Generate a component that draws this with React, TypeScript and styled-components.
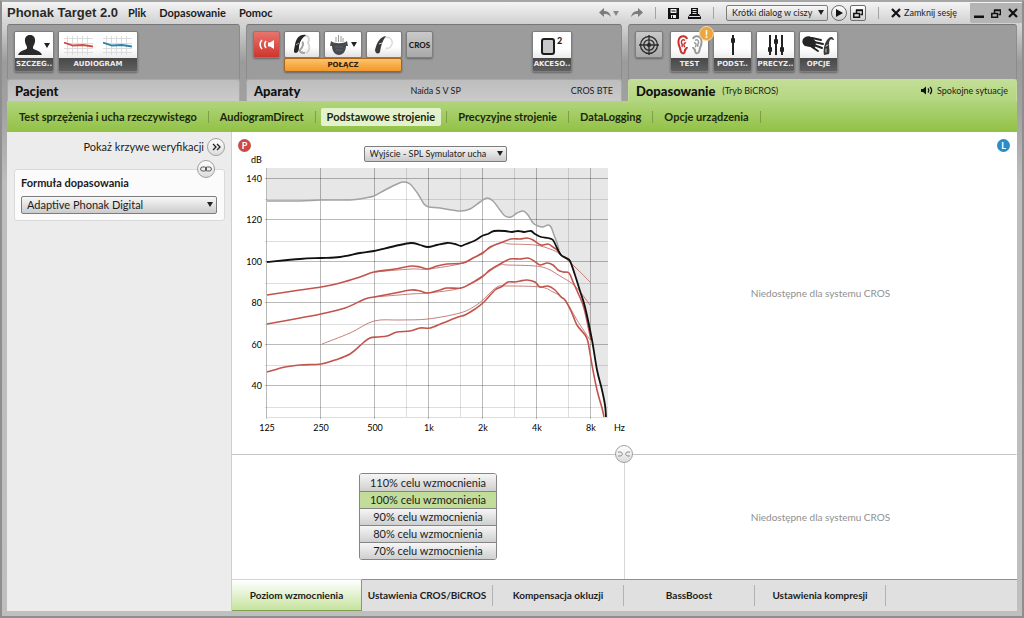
import React from "react";
import styled, { createGlobalStyle, css } from "styled-components";

const GlobalStyle = createGlobalStyle`
  * { box-sizing: border-box; }
  body { margin: 0; font-family: Lato, "Open Sans", sans-serif; font-size: 11px; line-height: 14px; color: #1c1c1c; }
  button, select { font: inherit; color: inherit; margin: 0; padding: 0; border: 0; background: none; }
  h1, h2, p { margin: 0; }
  svg { display: block; }
`;

const geometric = `"Lato", "Inter", sans-serif`;

const Window = styled.div`
  min-height: 100vh;
  display: flex;
  flex-direction: column;
  padding: 0 5px 5px;
  border: 2px solid #8e8e8e;
  border-top-color: #a6a6a6;
  background: linear-gradient(#f0f0f0 0, #d2d2d2 24px, #9b9b9b 60px, #a2a2a2 110px, #bdbdbd 180px, #bfbfbf 100%);
`;

const TitleBar = styled.header`
  display: flex;
  align-items: center;
  justify-content: space-between;
  height: 22px;
  margin: 0 -5px;
  padding-left: 5px;
  background: linear-gradient(#f4f4f4, #d0d0d0);
`;

const Row = styled.div<{ $gap?: number }>`
  display: flex;
  align-items: center;
  gap: ${(p) => p.$gap ?? 0}px;
`;

const AppName = styled.h1`
  font: bold 13px/18px "Liberation Sans", Arial, sans-serif;
  color: #2a2a2a;
`;

const MenuButton = styled.button`
  font-size: 11px;
  font-weight: bold;
`;

const IconButton = styled.button`
  display: grid;
  place-items: center;
`;

const SmallButton = styled(IconButton)<{ $round?: boolean }>`
  width: 16px;
  height: 16px;
  border: 1px solid #6d6d6d;
  border-radius: ${(p) => (p.$round ? "8px" : "2px")};
  background: linear-gradient(#fff, #cfcfcf);
`;

const Separator = styled.span`
  width: 1px;
  height: 12px;
  background: #a3a3a3;
`;

const SelectBox = styled.span<{ $height: number; $width: string; $size: number }>`
  position: relative;
  display: block;
  width: ${(p) => p.$width};
  height: ${(p) => p.$height}px;
  font-size: ${(p) => p.$size}px;

  select {
    appearance: none;
    display: block;
    width: 100%;
    height: 100%;
    border: 1px solid #7d7d7d;
    border-radius: 2px;
    background: linear-gradient(#f8f8f8, #cbcbcb);
    padding-left: 5px;
  }

  svg {
    position: absolute;
    right: 4px;
    top: calc(50% - 3px);
    pointer-events: none;
  }
`;

const CloseSession = styled.button`
  display: flex;
  align-items: center;
  gap: 3px;
  font-size: 9px;
`;

const WindowControls = styled.div`
  display: flex;
  align-items: center;
  justify-content: space-around;
  width: 52px;
  height: 20px;
  align-self: flex-start;
  background: #b4b4b4;
  border-bottom-left-radius: 2px;
`;

const Sections = styled.div`
  display: grid;
  grid-template-columns: 233fr 376fr 389fr;
  column-gap: 6px;
`;

const Toolbar = styled.div`
  display: flex;
  align-items: flex-start;
  gap: 4px;
  height: 55px;
  padding: 6px;
  border: 1px solid #8c8c8c;
  border-top-color: #777;
  border-bottom: 0;
  border-radius: 3px 3px 0 0;
  background: #9c9c9c;
`;

const SectionHead = styled.div<{ $active?: boolean }>`
  display: flex;
  align-items: center;
  height: 22px;
  padding: 0 8px 0 7px;
  font-size: 9px;
  border-radius: 3px 3px 0 0;
  background: ${(p) => (p.$active ? "linear-gradient(#c3de97, #b3d680)" : "linear-gradient(#bdbdbd, #cacaca)")};
  border: 1px solid ${(p) => (p.$active ? "#c3de97" : "#a9a9a9")};
  border-bottom: 0;

  h2 {
    font: 900 13px/18px ${geometric};
    color: #111;
  }
`;

const Spread = styled.span`
  flex: 1;
`;

const tile = css`
  border: 1px solid #7e7e7e;
  border-radius: 2px;
  box-shadow: 0 1px 2px rgba(0, 0, 0, 0.35);
  overflow: hidden;
`;

const Tile = styled.button<{ $width: number }>`
  ${tile}
  display: flex;
  flex-direction: column;
  width: ${(p) => p.$width}px;
  height: 41px;
`;

const Face = styled.span`
  flex: 1;
  width: 100%;
  display: flex;
  align-items: center;
  justify-content: center;
  gap: 10px;
  background: linear-gradient(#fff 60%, #ececec);
`;

const TileLabel = styled.span`
  width: 100%;
  height: 13px;
  font: bold 7px/12px "DejaVu Sans", sans-serif;
  text-align: center;
  white-space: nowrap;
  color: #ececec;
  background: linear-gradient(#484848, #606060);
`;

const FlatTile = styled.button<{ $width: number; $tone?: "red" | "gray" }>`
  ${tile}
  display: flex;
  align-items: center;
  justify-content: center;
  gap: 3px;
  width: ${(p) => p.$width}px;
  height: 27px;
  font-size: 8px;
  font-weight: 900;
  background: ${(p) =>
    p.$tone === "red"
      ? "linear-gradient(#e8746c, #cf352c)"
      : p.$tone === "gray"
        ? "linear-gradient(#c9c9c9, #a9a9a9)"
        : "linear-gradient(#fff 60%, #e2e2e2)"};
`;

const Aids = styled.div`
  display: grid;
`;

const Connect = styled.button`
  ${tile}
  height: 14px;
  border-color: #a8641a;
  background: linear-gradient(#fcc36a, #f2972a);
  font: bold 7px/12px "DejaVu Sans", sans-serif;
  color: #33200a;
`;

const Pushed = styled.span`
  margin-left: auto;
  padding-right: 43px;
`;

const BadgeHost = styled.span`
  position: relative;
  margin-left: 3px;
`;

const Badge = styled.span`
  position: absolute;
  top: -5px;
  right: -5px;
  width: 15px;
  height: 15px;
  border: 1px solid #f6dcae;
  border-radius: 8px;
  background: #eda63e;
  color: #fff;
  font: bold 11px/13px ${geometric};
  text-align: center;
`;

const GreenNav = styled.nav`
  display: flex;
  align-items: center;
  height: 31px;
  padding-left: 6px;
  background: linear-gradient(#b1d57c, #92c145);
`;

const NavItem = styled.button<{ $active?: boolean }>`
  height: 18px;
  padding: 0 6px;
  border-radius: 2px;
  font: bold 11px/16px ${geometric};
  color: #1c280c;
  background: ${(p) => (p.$active ? "#e4f1cd" : "none")};
`;

const NavSeparator = styled(Separator)`
  margin: 0 5px;
  background: #7d9f46;
`;

const Body = styled.div`
  flex: 1;
  display: flex;
`;

const Sidebar = styled.aside`
  width: 225px;
  padding: 6px 6px 6px 7px;
  border-right: 1px solid #cfcfcf;
  background: #ececec;
`;

const RoundButton = styled(IconButton)`
  width: 18px;
  height: 18px;
  border: 1px solid #a0a0a0;
  border-radius: 9px;
  background: linear-gradient(#fff, #dcdcdc);
`;

const VerifyRow = styled.div`
  display: flex;
  justify-content: flex-end;
  align-items: center;
  gap: 3px;
`;

const FormulaCard = styled.section`
  position: relative;
  margin-top: 13px;
  padding: 6px 7px 6px 6px;
  border: 1px solid #dadada;
  border-radius: 3px;
  background: #fbfbfb;

  label { display: block; font-weight: bold; margin-bottom: 6px; }
`;

const LinkButton = styled(RoundButton)`
  position: absolute;
  top: -10px;
  right: 9px;
`;

const Main = styled.main`
  flex: 1;
  display: flex;
  flex-direction: column;
  background: #fff;
`;

const Panes = styled.div`
  flex: 1;
  position: relative;
  display: grid;
  grid-template-columns: 1fr 1fr;
  grid-template-rows: 323fr 124fr;
`;

const Pane = styled.section<{ $line?: boolean }>`
  position: relative;
  display: flex;
  flex-direction: column;
  align-items: center;
  border-right: 1px solid ${(p) => (p.$line ? "#d8d8d8" : "transparent")};
`;

const UpperPane = styled(Pane)`
  border-bottom: 1px solid #c4c4c4;
`;

const CoupleButton = styled(RoundButton)`
  position: absolute;
  left: calc(50% - 10px);
  top: calc(323 / 447 * 100% - 10px);
`;

const SideMark = styled.span<{ $side: "left" | "right" }>`
  position: absolute;
  top: 7px;
  ${(p) => (p.$side === "left" ? "left: 6px; background: #cc4a44;" : "right: 6px; background: #2c8cc8;")}
  width: 13px;
  height: 13px;
  border-radius: 7px;
  color: #fff;
  font: bold 9px/13px ${geometric};
  text-align: center;
`;

const ChartHead = styled.div`
  padding: 14px 0 0 14px;
`;

const Chart = styled.svg`
  align-self: flex-start;
  margin: -12px 0 0 10px;
  overflow: visible;
  font-size: 9px;
`;

const Unavailable = styled.p`
  margin: auto;
  font-size: 10px;
  color: #8f8f8f;
`;

const GainList = styled.div`
  display: grid;
  width: 138px;
  margin-top: 18px;
  border: 1px solid #858585;
  border-radius: 3px;
  overflow: hidden;
`;

const GainButton = styled.button<{ $active?: boolean }>`
  height: 17px;
  line-height: 16px;
  background: ${(p) => (p.$active ? "#c2dd9a" : "linear-gradient(#f6f6f6, #cfcfcf)")};

  & + & { border-top: 1px solid #858585; }
`;

const BottomTabs = styled.nav`
  display: flex;
  height: 32px;
  background: #e0e0e0;
`;

const BottomTab = styled.button<{ $active?: boolean }>`
  display: flex;
  align-items: center;
  justify-content: center;
  width: ${(p) => (p.$active ? "130px" : "131px")};
  font-size: 10px;
  font-weight: bold;
  border-top: 1px solid ${(p) => (p.$active ? "transparent" : "#8f8f8f")};
  ${(p) =>
    p.$active &&
    css`
      background: linear-gradient(#fff, #c6e39e);
      border-right: 1px solid #8f8f8f;
      border-bottom: 1px solid #7fa055;
    `}

  span { flex: 1; line-height: 21px; }
  ${(p) => !p.$active && "span { border-right: 1px solid #b2b2b2; }"}
`;

const TabFiller = styled.span`
  flex: 1;
  border-top: 1px solid #8f8f8f;
`;

type Point = [number, number];

const PLOT = { left: 25, top: 18, width: 341, height: 249 };

const outputLimit: Point[] = [
  [0, 33], [33, 33], [54, 32], [83, 32], [98, 30], [107, 28], [118, 22], [128, 17], [136, 14], [143, 16], [151, 26],
  [157, 36], [162, 39], [173, 40], [193, 43], [203, 41], [213, 34], [220, 30], [226, 33], [233, 42], [238, 48],
  [244, 49], [250, 45], [256, 43], [261, 47], [266, 55], [271, 58], [276, 59], [281, 57], [284, 59], [287, 67],
  [290, 75], [292, 82],
];
const maximum: Point[] = [
  [0, 94], [33, 91], [54, 90], [73, 89], [93, 85], [107, 83], [128, 78], [144, 75], [153, 77], [161, 79], [170, 77],
  [180, 75], [188, 76], [194, 78], [199, 76], [207, 73], [215, 68], [221, 66], [227, 63], [238, 63], [245, 64],
  [251, 63], [257, 64], [264, 63], [268, 66], [274, 69], [281, 70], [286, 72], [290, 80], [294, 87], [299, 90],
  [303, 93], [308, 107], [313, 123], [318, 139], [325, 172], [330, 202], [335, 222], [338, 237], [339, 249],
];
const loud: Point[] = [
  [0, 127], [33, 122], [54, 119], [73, 115], [93, 109], [107, 104], [128, 101], [144, 98], [153, 99], [161, 101],
  [170, 98], [180, 96], [196, 95], [206, 90], [216, 85], [223, 79], [233, 75], [244, 71], [253, 71], [260, 70],
  [266, 72], [274, 77], [281, 76], [286, 79], [290, 82], [294, 87], [299, 90], [303, 93],
];
const medium: Point[] = [
  [0, 156], [33, 150], [54, 146], [78, 140], [98, 131], [107, 129], [123, 126], [144, 122], [153, 123], [161, 125],
  [173, 122], [180, 120], [194, 120], [203, 116], [215, 109], [223, 102], [233, 96], [243, 91], [253, 91],
  [261, 90], [267, 93], [273, 97], [280, 95], [286, 97], [291, 102], [296, 104], [302, 105], [306, 114],
  [311, 125], [317, 140], [324, 172],
];
const soft: Point[] = [
  [0, 204], [18, 199], [33, 197], [54, 196], [68, 192], [83, 186], [96, 175], [103, 170], [111, 169], [120, 168],
  [130, 164], [143, 163], [153, 160], [163, 160], [176, 155], [191, 149], [198, 147], [208, 141], [217, 134],
  [228, 122], [234, 119], [241, 114], [248, 114], [253, 113], [260, 112], [268, 114], [273, 119], [281, 118],
  [288, 122], [294, 129], [298, 132], [304, 143], [310, 157], [318, 167], [321, 174], [325, 197], [330, 222],
  [335, 240], [337, 249],
];
const targets: Point[][] = [
  [[107, 104], [144, 101], [161, 101], [196, 95], [216, 84], [233, 75], [243, 76], [268, 77], [283, 81], [293, 86], [308, 99], [323, 114]],
  [[107, 129], [144, 126], [161, 125], [194, 120], [215, 108], [233, 97], [240, 97], [268, 98], [281, 101], [293, 108], [308, 118], [323, 137]],
  [[55, 176], [83, 165], [107, 153], [133, 152], [161, 151], [193, 145], [208, 138], [218, 130], [230, 119], [240, 118], [273, 119], [286, 124], [298, 132], [310, 152], [323, 172]],
];

const n = (v: number) => v.toFixed(1);

const smooth = (pts: Point[]) =>
  pts.slice(1).reduce((d, p, i) => {
    const a = pts[i - 1] ?? pts[i];
    const b = pts[i];
    const c = pts[i + 2] ?? p;
    return `${d}C${n(b[0] + (p[0] - a[0]) / 6)} ${n(b[1] + (p[1] - a[1]) / 6)} ${n(p[0] - (c[0] - b[0]) / 6)} ${n(p[1] - (c[1] - b[1]) / 6)} ${p[0]} ${p[1]}`;
  }, `M${pts[0][0]} ${pts[0][1]}`);

const frequencies: [number, string][] = [
  [0, "125"], [54, "250"], [108, "500"], [162, "1k"], [216, "2k"], [270, "4k"], [324, "8k"],
];
const levels: [number, string][] = [
  [11, "140"], [52, "120"], [94, "100"], [135, "80"], [177, "60"], [218, "40"],
];
const minorX = [139, 193, 247, 301];
const minorY = [31, 73, 115, 156, 197, 239];

function SplChart() {
  const tail = maximum.slice(29);
  const shade = `${smooth(outputLimit)}L${tail.map((p) => p.join(" ")).join("L")}L${PLOT.width} ${PLOT.height}V0H0Z`;
  return (
    <Chart width="382" height="284" role="img" aria-label="Wyjście SPL">
      <text x="9" y="13">dB</text>
      <g transform={`translate(${PLOT.left} ${PLOT.top})`} fill="none">
        <path d={shade} fill="#e7e7e7" />
        <g stroke="#000" strokeOpacity="0.13" shapeRendering="crispEdges">
          {minorX.map((x) => <path key={x} d={`M${x + 0.5} 0V${PLOT.height}`} />)}
          {minorY.map((y) => <path key={y} d={`M-2 ${y + 0.5}H${PLOT.width}`} />)}
          <path d={`M0 ${PLOT.height + 0.5}H${PLOT.width}`} />
        </g>
        <g stroke="#000" strokeOpacity="0.27" shapeRendering="crispEdges">
          {frequencies.map(([x]) => <path key={x} d={`M${x - 0.5} 0V${PLOT.height + 2}`} />)}
          {levels.map(([y]) => <path key={y} d={`M-2 ${y - 0.5}H${PLOT.width}`} />)}
        </g>
        <path d={smooth(outputLimit)} stroke="#a2a2a2" strokeWidth="1.5" />
        {targets.map((t, i) => <path key={i} d={smooth(t)} stroke="#b9605c" strokeWidth="0.8" />)}
        {[loud, medium, soft].map((c, i) => <path key={i} d={smooth(c)} stroke="#c2544c" strokeWidth="1.6" />)}
        <path d={smooth(maximum)} stroke="#111" strokeWidth="1.8" />
      </g>
      {levels.map(([y, label]) => (
        <text key={label} x="20" y={PLOT.top + y + 3} textAnchor="end">{label}</text>
      ))}
      {frequencies.map(([x, label]) => (
        <text key={label} x={PLOT.left + x} y="281" textAnchor="middle">{label}</text>
      ))}
      <text x="372" y="281">Hz</text>
    </Chart>
  );
}

const Caret = ({ color = "#222" }: { color?: string }) => (
  <svg width="6" height="5" viewBox="0 0 6 5" aria-hidden="true"><path d="M0 0H6L3 5Z" fill={color} /></svg>
);

const Undo = ({ flip = false }: { flip?: boolean }) => (
  <svg width="12" height="10" viewBox="0 0 12 10" aria-hidden="true">
    <path transform={flip ? "translate(12 0) scale(-1 1)" : undefined} d="M5 0V3C9 3 11 5 12 9C10 6.500 8 6 5 6V9L0 4.500Z" fill="#7c7c7c" />
  </svg>
);

const Save = () => (
  <svg width="11" height="11" viewBox="0 0 11 11" aria-hidden="true">
    <path d="M0 0H11V11H0Z" fill="#111" /><path d="M2.500 1H8.500V5H2.500ZM3 7H8V10H3Z" fill="#eee" /><path d="M3.500 3H7.500M4.500 7.500V10" stroke="#111" fill="none" />
  </svg>
);

const Print = () => (
  <svg width="13" height="11" viewBox="0 0 13 11" aria-hidden="true">
    <path d="M3 0H10V6H11L13 9V11H0V9L2 6H3Z" fill="#111" /><path d="M4.500 1.500H8.500M4.500 3.500H8.500M4.500 5.500H8.500M1 8.500H12" stroke="#ddd" fill="none" />
  </svg>
);

const Cross = () => (
  <svg width="10" height="10" viewBox="0 0 10 10" aria-hidden="true"><path d="M1 1L9 9M9 1L1 9" stroke="#111" strokeWidth="2.200" /></svg>
);

const Windows = () => (
  <svg width="10" height="9" viewBox="0 0 10 9" fill="none" stroke="#111" aria-hidden="true">
    <path d="M3.500 4V1.500H9.500V5.500H7.500M3 1H10" strokeWidth="1.500" /><path d="M.8 4.500H6.500V8.200H.8Z" strokeWidth="1.500" />
  </svg>
);

const Person = () => (
  <svg width="24" height="21" viewBox="0 0 24 21" fill="#292929" aria-hidden="true">
    <path d="M12 0C15.500 0 17.500 2.500 17 6.500C16.700 9 15.500 10.500 15 12V13.500C16 15 22 15 24 20H0C2 15 8 15 9 13.500V12C8.500 10.500 7.300 9 7 6.500C6.500 2.500 8.500 0 12 0Z" />
  </svg>
);

const MiniAudiogram = ({ color }: { color: string }) => (
  <svg width="29" height="19" viewBox="0 0 29 19" fill="none" aria-hidden="true">
    <path d="M3.500 0V19M8.500 0V19M13.500 0V19M18.500 0V19M23.500 0V19M0 2.500H29M0 7.500H29M0 12.500H29M0 16.500H29" stroke="#dcdcdc" />
    <path d="M0 6.500L9 9.500L19 9L29 10.500" stroke={color} strokeWidth="1.800" />
  </svg>
);

const Sound = () => (
  <svg width="16" height="11" viewBox="0 0 16 11" fill="none" stroke="#fff" strokeWidth="1.600" aria-hidden="true">
    <path d="M3 1C.5 3.500 .5 7.500 3 10M7 2C5.500 4 5.500 7 7 9" /><path d="M15 1V10L11 7.500H9V3.500H11Z" fill="#fff" stroke="none" />
  </svg>
);

const HearingAid = () => (
  <svg width="18" height="21" viewBox="0 0 18 21" fill="none" aria-hidden="true">
    <path d="M11 2C16 1 17 5 15 9C17 12 17 17 13 19" stroke="#d4d4d4" strokeWidth="2" />
    <path d="M13 1C6 0 3 5 2 11C1 16 0 19 3 19C6 18 6 15 6 12C7 7 9 4 13 1Z" fill="#262626" />
    <path d="M9 8C11 9 10 13 7 16C6 18 9 19 12 19" stroke="#a5a5a5" strokeWidth="2" /><path d="M3 11L6 9" stroke="#aaa" />
  </svg>
);

const EarPiece = () => (
  <svg width="18" height="20" viewBox="0 0 18 20" fill="none" aria-hidden="true">
    <path d="M6 7V2M8.500 7V0M11 7V1M13 7V3" stroke="#9a9a9a" />
    <path d="M1 6C4 9 14 9 17 6L18 11L16 11C16 16 13 20 9 20C5 20 2 16 2 11H0Z" fill="#474a50" /><path d="M5 12H13M6 15H12" stroke="#606368" />
  </svg>
);

const SmallAid = () => (
  <svg width="20" height="18" viewBox="0 0 20 18" fill="none" aria-hidden="true">
    <path d="M10 2C15 0 19 3 18 8C17 11 15 13 12 12" stroke="#dadada" strokeWidth="1.500" />
    <path d="M12 0C6 1 3 6 1 14C1 17 4 19 6 16C7 11 8 5 12 0Z" fill="#3a3a3a" /><path d="M5 8L8 7" stroke="#ccc" />
  </svg>
);

const Accessory = () => (
  <svg width="22" height="19" viewBox="0 0 22 19" aria-hidden="true">
    <rect x="1" y="3" width="12" height="15" rx="2" fill="#c9c9c9" stroke="#1c1c1c" strokeWidth="2" />
    <text x="16" y="8" fontSize="9" fontWeight="900" fill="#1c1c1c">2</text>
  </svg>
);

const Crosshair = () => (
  <svg width="20" height="20" viewBox="0 0 20 20" fill="none" stroke="#2b2b2b" strokeWidth="1.300" aria-hidden="true">
    <circle cx="10" cy="10" r="8.500" /><circle cx="10" cy="10" r="5.200" /><circle cx="10" cy="10" r="1.500" fill="#2b2b2b" /><path d="M10 0V20M0 10H20" />
  </svg>
);

const Ear = ({ color, flip }: { color: string; flip?: boolean }) => (
  <svg width="11" height="20" viewBox="0 0 11 20" fill="none" stroke={color} aria-hidden="true">
    <g transform={flip ? "translate(11 0) scale(-1 1)" : undefined}>
      <path d="M10 4C9 0 2 0 1.500 6C1 10 3 12 3.500 15C4 19 8 20 8 15C9 14 10 13 10 12" strokeWidth="2" />
      <path d="M8 5.500C6 4 4 5 4.500 8C5 9 6 10 5 12M9 8C7 7 6 11 8 12" strokeWidth="1.500" />
    </g>
  </svg>
);

const Sliders = ({ knobs }: { knobs: number[] }) => (
  <svg width={knobs.length * 6} height="20" viewBox={`0 0 ${knobs.length * 6} 20`} aria-hidden="true">
    {knobs.map((y, i) => (
      <g key={i} fill="#222"><rect x={i * 6 + 2} width="2" height="20" /><rect x={i * 6 + 1} y={y} width="4" height="5" rx="1" /></g>
    ))}
  </svg>
);

const HandAid = () => (
  <svg width="33" height="20" viewBox="0 0 33 20" fill="none" strokeLinecap="round" aria-hidden="true">
    <path d="M1 4C3 1 7 0 11 3L14 7L13 13L8 12L3 11C0 9 0 6 1 4Z" fill="#252525" />
    <path d="M10 3L19 5M12 7L21 9M12 10L20 13M10 12L16 16" stroke="#252525" strokeWidth="2" />
    <path d="M31 5C29 3 27 5 27 9C27 13 28 16 27 19L22 20C21 16 22 9 25 5C28 1 31 1 32 5Z" fill="#3a3a3a" />
    <path d="M24 11L26 10M24 14V17" stroke="#ccc" />
  </svg>
);

const Speaker = () => (
  <svg width="12" height="9" viewBox="0 0 12 9" fill="none" stroke="#111" aria-hidden="true">
    <path d="M0 3H2L5 .5V8.500L2 6H0Z" fill="#111" stroke="none" /><path d="M7 2.500C8 3.500 8 5.500 7 6.500M9 1C11.200 3 11.200 6 9 8" strokeWidth="1.300" />
  </svg>
);

const Chain = () => (
  <svg width="12" height="6" viewBox="0 0 12 6" fill="none" stroke="#555" aria-hidden="true">
    <rect x=".6" y="1" width="6" height="4" rx="2" /><rect x="5.400" y="1" width="6" height="4" rx="2" />
  </svg>
);

const Unlinked = () => (
  <svg width="14" height="6" viewBox="0 0 14 6" fill="none" stroke="#8a8a8a" aria-hidden="true">
    <path d="M1 1H3C6 1 6 5 3 5H1M13 1H11C8 1 8 5 11 5H13" />
  </svg>
);

const navItems = ["Test sprzężenia i ucha rzeczywistego", "AudiogramDirect", "Podstawowe strojenie", "Precyzyjne strojenie", "DataLogging", "Opcje urządzenia"];
const gains = [110, 100, 90, 80, 70];
const tabs = ["Poziom wzmocnienia", "Ustawienia CROS/BiCROS", "Kompensacja okluzji", "BassBoost", "Ustawienia kompresji"];

type DropdownProps = { id: string; value: string; width: string; height: number; size: number; label?: string };

const Dropdown = ({ id, value, width, height, size, label }: DropdownProps) => (
  <SelectBox $width={width} $height={height} $size={size}>
    <select id={id} aria-label={label} defaultValue={value}><option>{value}</option></select>
    <Caret />
  </SelectBox>
);

export default function App() {
  return (
    <>
      <GlobalStyle />
      <Window>
        <TitleBar>
          <Row $gap={10}>
            <AppName>Phonak Target 2.0</AppName>
            <Row $gap={13}>
              <MenuButton>Plik</MenuButton>
              <MenuButton>Dopasowanie</MenuButton>
              <MenuButton>Pomoc</MenuButton>
            </Row>
          </Row>
          <Row $gap={13}>
            <Row $gap={12}>
              <Row $gap={2}>
                <IconButton aria-label="Cofnij"><Undo /></IconButton>
                <Caret color="#888" />
              </Row>
              <IconButton aria-label="Ponów"><Undo flip /></IconButton>
              <Separator />
              <Row $gap={9}>
                <IconButton aria-label="Zapisz"><Save /></IconButton>
                <IconButton aria-label="Drukuj"><Print /></IconButton>
              </Row>
              <Separator />
              <Row $gap={3}>
                <Dropdown id="sample" label="Próbka dźwięku" value="Krótki dialog w ciszy" width="102px" height={16} size={9} />
                <SmallButton $round aria-label="Odtwórz">
                  <svg width="7" height="8" viewBox="0 0 7 8"><path d="M0 0L7 4L0 8Z" fill="#111" /></svg>
                </SmallButton>
                <SmallButton aria-label="Okna"><Windows /></SmallButton>
              </Row>
              <Separator />
              <CloseSession><Cross />Zamknij sesję</CloseSession>
            </Row>
            <WindowControls>
              <IconButton aria-label="Minimalizuj"><svg width="10" height="9"><path d="M0 6.500H10V9H0Z" fill="#111" /></svg></IconButton>
              <IconButton aria-label="Przywróć"><Windows /></IconButton>
              <IconButton aria-label="Zamknij"><Cross /></IconButton>
            </WindowControls>
          </Row>
        </TitleBar>

        <Sections>
          <div>
            <Toolbar>
              <Tile $width={40}>
                <Face><Row $gap={2}><Person /><Caret /></Row></Face>
                <TileLabel>SZCZEG..</TileLabel>
              </Tile>
              <Tile $width={80}>
                <Face><MiniAudiogram color="#cf4f46" /><MiniAudiogram color="#2d83ac" /></Face>
                <TileLabel>AUDIOGRAM</TileLabel>
              </Tile>
            </Toolbar>
            <SectionHead><h2>Pacjent</h2></SectionHead>
          </div>
          <div>
            <Toolbar>
              <FlatTile $width={27} $tone="red" aria-label="Dźwięk"><Sound /></FlatTile>
              <Aids>
                <Row $gap={4}>
                  <FlatTile $width={36} aria-label="Aparat"><HearingAid /></FlatTile>
                  <FlatTile $width={38} aria-label="Wkładka"><EarPiece /><Caret /></FlatTile>
                  <FlatTile $width={36} aria-label="Nadajnik"><SmallAid /></FlatTile>
                </Row>
                <Connect>POŁĄCZ</Connect>
              </Aids>
              <FlatTile $width={27} $tone="gray">CROS</FlatTile>
              <Pushed>
                <Tile $width={40}>
                  <Face><Accessory /></Face>
                  <TileLabel>AKCESO..</TileLabel>
                </Tile>
              </Pushed>
            </Toolbar>
            <SectionHead>
              <h2>Aparaty</h2>
              <Spread />
              <span>Naída S V SP</span>
              <Spread />
              <span>CROS BTE</span>
            </SectionHead>
          </div>
          <div>
            <Toolbar>
              <FlatTile $width={28} $tone="gray" aria-label="Cel"><Crosshair /></FlatTile>
              <BadgeHost>
                <Tile $width={39}>
                  <Face><Row $gap={4}><Ear color="#c8322e" /><Ear color="#9b9b9b" flip /></Row></Face>
                  <TileLabel>TEST</TileLabel>
                </Tile>
                <Badge>!</Badge>
              </BadgeHost>
              <Tile $width={39}>
                <Face><Sliders knobs={[3]} /></Face>
                <TileLabel>PODST..</TileLabel>
              </Tile>
              <Tile $width={39}>
                <Face><Sliders knobs={[12, 4, 12]} /></Face>
                <TileLabel>PRECYZ..</TileLabel>
              </Tile>
              <Tile $width={39}>
                <Face><HandAid /></Face>
                <TileLabel>OPCJE</TileLabel>
              </Tile>
            </Toolbar>
            <SectionHead $active>
              <Row $gap={7}><h2>Dopasowanie</h2><span>(Tryb BiCROS)</span></Row>
              <Spread />
              <Row $gap={4}><Speaker /><span>Spokojne sytuacje</span></Row>
            </SectionHead>
          </div>
        </Sections>

        <GreenNav>
          {navItems.map((item) => (
            <React.Fragment key={item}>
              <NavItem $active={item === "Podstawowe strojenie"}>{item}</NavItem>
              <NavSeparator />
            </React.Fragment>
          ))}
        </GreenNav>

        <Body>
          <Sidebar>
            <VerifyRow>
              <span>Pokaż krzywe weryfikacji</span>
              <RoundButton aria-label="Pokaż krzywe weryfikacji">
                <svg width="9" height="8" viewBox="0 0 9 8" fill="none" stroke="#222" strokeWidth="1.300"><path d="M1 1L4 4L1 7M5 1L8 4L5 7" /></svg>
              </RoundButton>
            </VerifyRow>
            <FormulaCard>
              <LinkButton aria-label="Połącz strony"><Chain /></LinkButton>
              <label htmlFor="formula">Formuła dopasowania</label>
              <Dropdown id="formula" value="Adaptive Phonak Digital" width="100%" height={18} size={11} />
            </FormulaCard>
          </Sidebar>
          <Main>
            <Panes>
              <UpperPane>
                <SideMark $side="left">P</SideMark>
                <ChartHead>
                  <Dropdown id="curve" label="Krzywa" value="Wyjście - SPL Symulator ucha" width="143px" height={16} size={9} />
                </ChartHead>
                <SplChart />
              </UpperPane>
              <UpperPane>
                <SideMark $side="right">L</SideMark>
                <Unavailable>Niedostępne dla systemu CROS</Unavailable>
              </UpperPane>
              <Pane $line>
                <GainList>
                  {gains.map((g) => (
                    <GainButton key={g} $active={g === 100} aria-pressed={g === 100}>{g}% celu wzmocnienia</GainButton>
                  ))}
                </GainList>
              </Pane>
              <Pane>
                <Unavailable>Niedostępne dla systemu CROS</Unavailable>
              </Pane>
              <CoupleButton aria-label="Rozłącz"><Unlinked /></CoupleButton>
            </Panes>
            <BottomTabs>
              {tabs.map((t, i) => (
                <BottomTab key={t} $active={i === 0}><span>{t}</span></BottomTab>
              ))}
              <TabFiller />
            </BottomTabs>
          </Main>
        </Body>
      </Window>
    </>
  );
}
